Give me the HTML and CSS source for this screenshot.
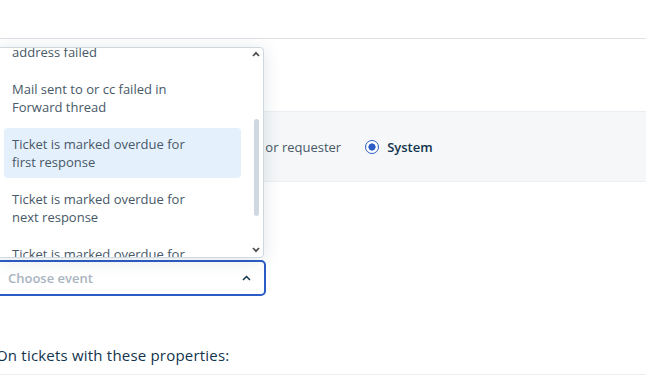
FILE: index.html
```html
<!DOCTYPE html>
<html lang="en">
<head>
  <meta charset="UTF-8">
  <meta name="viewport" content="width=device-width, initial-scale=1.0">
  <title>Automation rule - Event</title>
  <link rel="stylesheet" href="styles.css">
</head>
<body>
  <header class="topbar"></header>

  <main class="content">
    <section class="performer">
      <label class="radio"><span class="radio-dot"></span>Anyone</label>
      <label class="radio"><span class="radio-dot"></span>Agent or requester</label>
      <label class="radio checked"><span class="radio-dot"></span>System</label>
    </section>

    <div class="event-field">
      <!-- open dropdown, scrolled a little -->
      <div class="event-menu">
        <ul class="event-list">
          <li><span>Mail sent to requester email address failed</span></li>
          <li><span>Mail sent to or cc failed in Forward thread</span></li>
          <li class="active"><span>Ticket is marked overdue for first response</span></li>
          <li><span>Ticket is marked overdue for next response</span></li>
          <li><span>Ticket is marked overdue for resolution</span></li>
        </ul>
        <div class="scroll-up">
          <svg width="8" height="6" viewBox="0 0 8 6"><path d="M1 5 L4 1.8 L7 5" fill="none" stroke="#505050" stroke-width="1.8"/></svg>
        </div>
        <div class="scroll-thumb"></div>
        <div class="scroll-down">
          <svg width="8" height="6" viewBox="0 0 8 6"><path d="M1 1 L4 4.2 L7 1" fill="none" stroke="#505050" stroke-width="1.8"/></svg>
        </div>
      </div>

      <div class="event-select">
        <span class="placeholder">Choose event</span>
        <svg class="caret" width="9" height="6" viewBox="0 0 9 6"><path d="M1 5 L4.5 1.5 L8 5" fill="none" stroke="#12344d" stroke-width="1.5"/></svg>
      </div>
    </div>

    <h3 class="properties-title">On tickets with these properties:</h3>
  </main>
</body>
</html>
```

FILE: styles.css
```css
/* Basic styling */
body {
  font-family: 'Open Sans', 'Noto Sans', sans-serif;
  font-size: 13px;
  color: #475867;
  background-color: #ffffff;
  margin: 0;
  padding: 0;
  overflow: hidden;
}

.topbar {
  height: 38px;
  border-bottom: 1px solid #dfe3e8;
}

.content {
  margin-left: -4px;
}

/* performer radios */
.performer {
  margin-top: 72px;
  height: 69px;
  display: flex;
  align-items: center;
  gap: 24px;
  padding-left: 119px;
  background-color: #f5f7f9;
  border-top: 1px solid #ebeff3;
  border-bottom: 1px solid #ebeff3;
}

.radio {
  display: flex;
  align-items: center;
  gap: 8px;
  line-height: 18px;
}

.radio-dot {
  width: 13px;
  height: 13px;
  border: 1px solid #92a2b1;
  border-radius: 50%;
  background-color: #ffffff;
  box-sizing: border-box;
}

.radio.checked {
  color: #12344d;
  font-weight: 600;
}

.radio.checked .radio-dot {
  border: 1.5px solid #2c5cc5;
  background: radial-gradient(circle, #2c5cc5 0, #2c5cc5 3.3px, #ffffff 3.9px);
  width: 14px;
  height: 14px;
}

/* event select */
.event-field {
  position: relative;
  margin-top: 78px;
  width: 270px;
}

.event-select {
  height: 36px;
  box-sizing: border-box;
  border: 2px solid #2c5cc5;
  border-radius: 5px;
  padding: 0 13px 0 10px;
  display: flex;
  align-items: center;
  justify-content: space-between;
}

.placeholder {
  color: #a9b4bf;
  font-weight: 600;
}

.caret {
  margin-top: -1px;
}

.event-menu {
  position: absolute;
  left: 0;
  bottom: 38px;
  width: 268px;
  height: 211px;
  box-sizing: border-box;
  border: 1px solid #cfd7df;
  border-radius: 4px;
  background-color: #ffffff;
  box-shadow: 0 2px 18px rgba(18, 52, 77, 0.13);
  overflow: hidden;
}

.event-list {
  list-style: none;
  margin: -30px 0 0 0;
  padding: 0 22px 0 7px;
}

.event-list li {
  padding: 7px 8px;
  margin-bottom: 5px;
  line-height: 18px;
  border-radius: 4px;
}

.event-list li span {
  display: block;
  max-width: 196px;
}

.event-list li.active {
  background-color: #e5f0fd;
}

.scroll-up,
.scroll-down {
  position: absolute;
  right: 3px;
  width: 8px;
  height: 6px;
  line-height: 0;
}

.scroll-up {
  top: 3px;
}

.scroll-down {
  bottom: 4px;
}

.scroll-thumb {
  position: absolute;
  right: 4px;
  top: 71px;
  width: 5px;
  height: 97px;
  border-radius: 3px;
  background-color: #cfd8e1;
}

.properties-title {
  margin: 49px 0 0 0;
  padding-bottom: 9px;
  font-size: 15px;
  line-height: 20px;
  font-weight: 500;
  letter-spacing: 0.2px;
  color: #12344d;
  border-bottom: 1px solid #ebeff3;
}
```
